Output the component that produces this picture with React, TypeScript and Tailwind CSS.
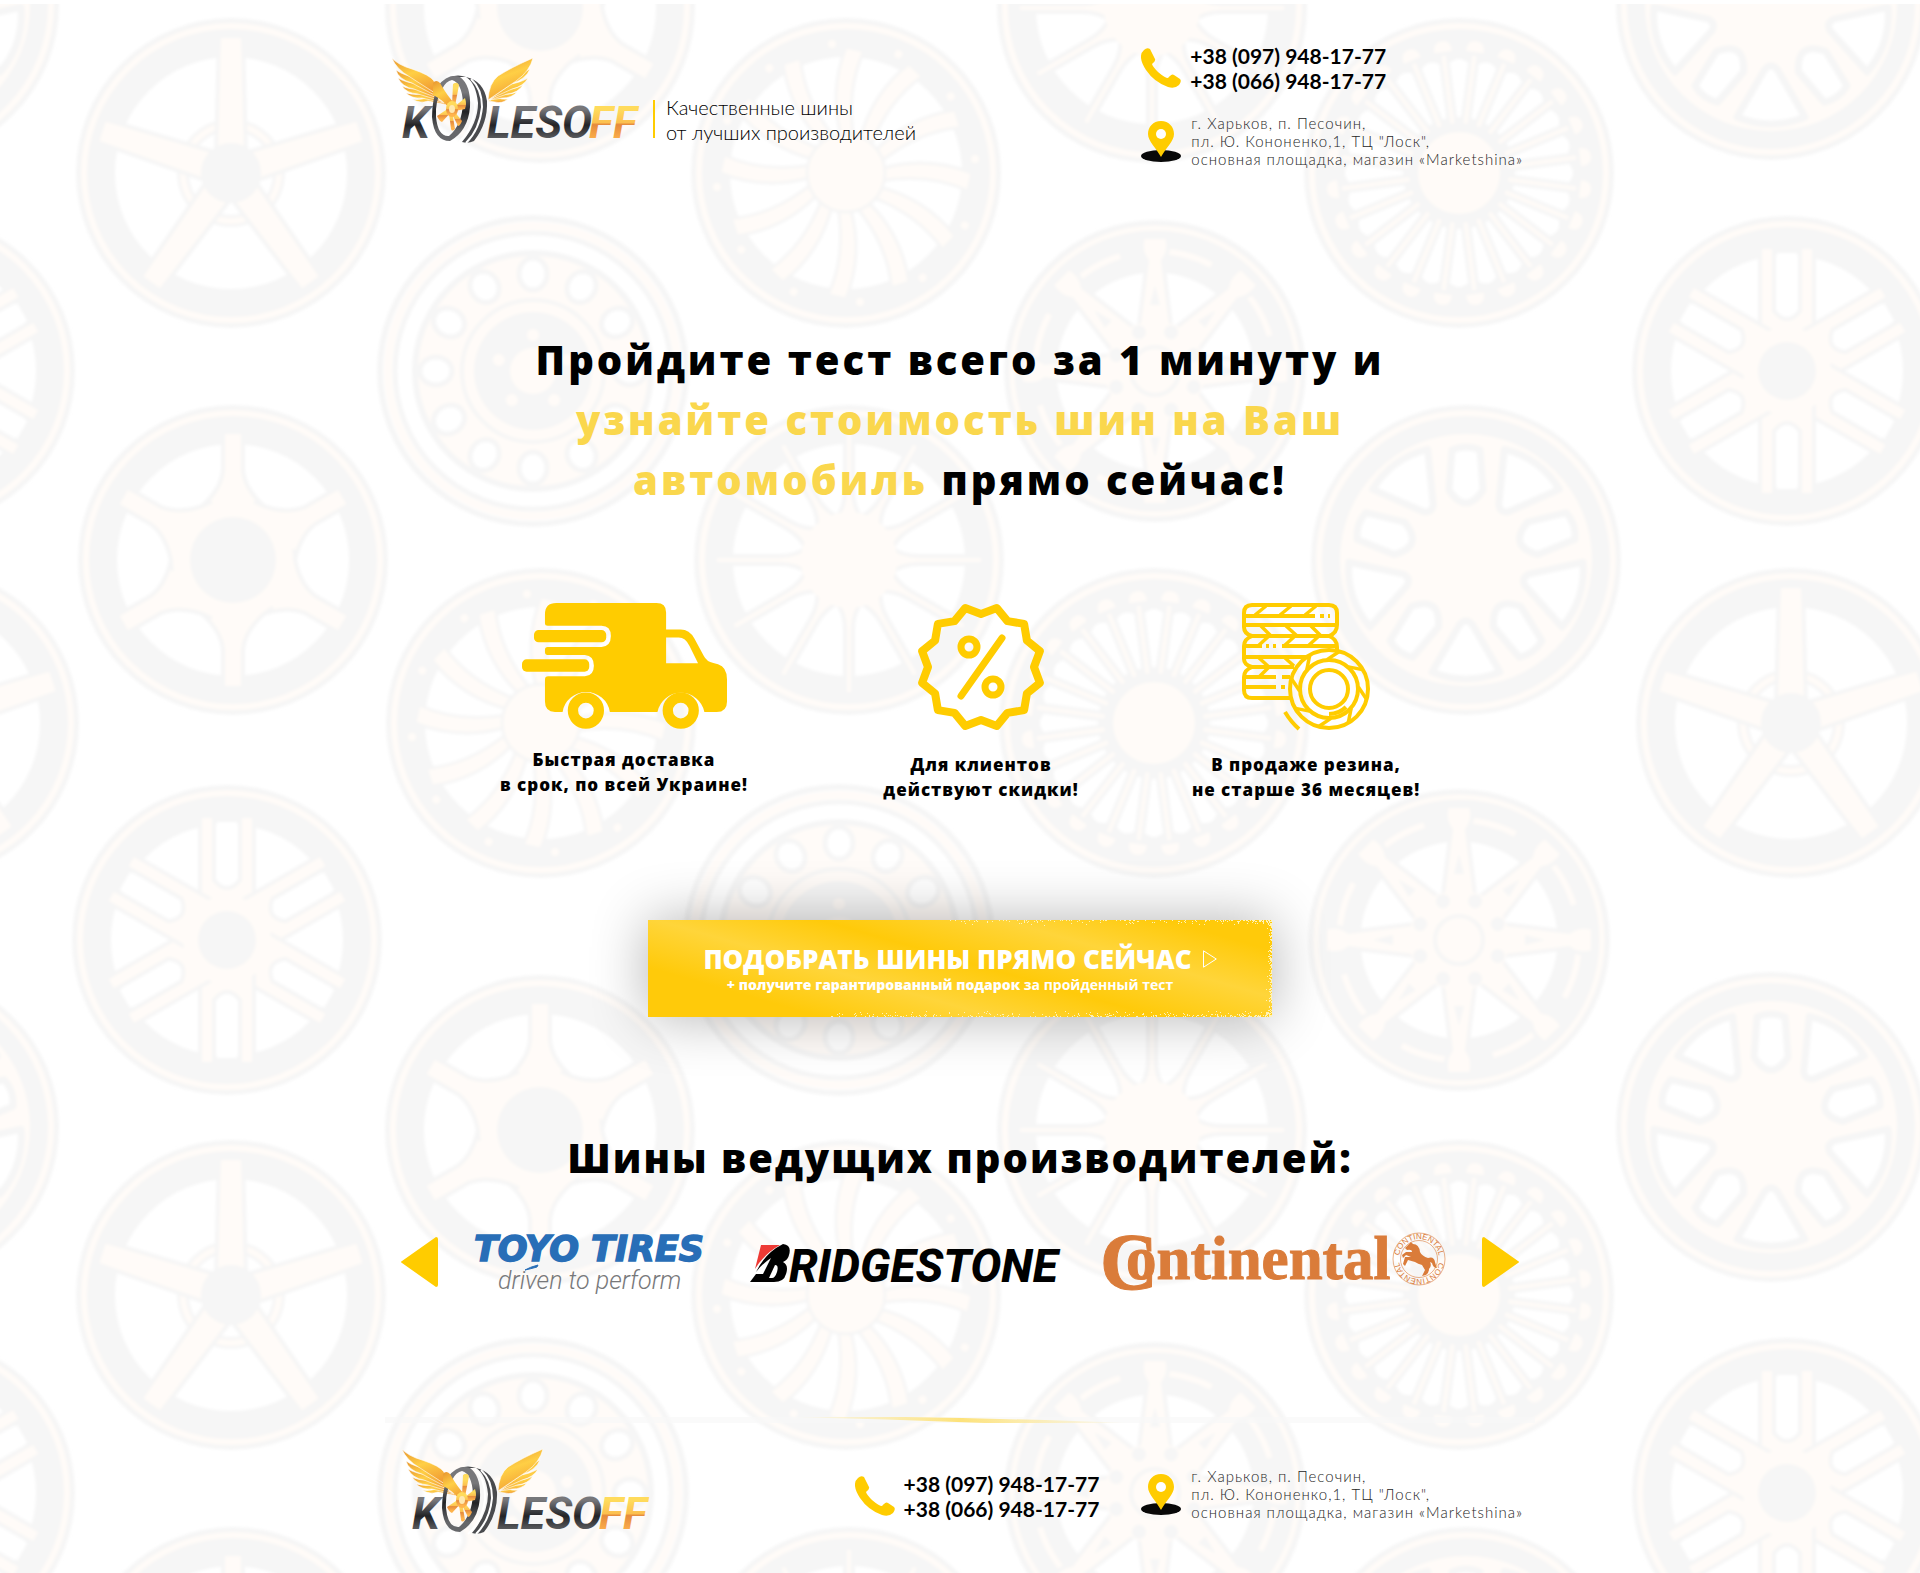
import React from "react";

const GRAY = "#f6f6f6";
const CREAM = "#fffbf8";
const HALO = "#f6f6f6";

type Kind = "five" | "six" | "double" | "pod" | "twist" | "thin" | "steel" | "spokes" | "fancy";

const TILE_W = 1867;
const TILE_H = 1122;

const wheels: { k: Kind; x: number; y: number }[] = [
  { k: "five", x: 231, y: 173 },
  { k: "six", x: 233, y: 560 },
  { k: "double", x: 227, y: 940 },
  { k: "six", x: 540, y: 8 },
  { k: "steel", x: 533, y: 371 },
  { k: "twist", x: 541, y: 723 },
  { k: "twist", x: 846, y: 173 },
  { k: "thin", x: 849, y: 560 },
  { k: "steel", x: 839, y: 940 },
  { k: "thin", x: 1152, y: 8 },
  { k: "fancy", x: 1155, y: 371 },
  { k: "spokes", x: 1154, y: 723 },
  { k: "spokes", x: 1459, y: 173 },
  { k: "pod", x: 1466, y: 560 },
  { k: "fancy", x: 1459, y: 940 },
  { k: "pod", x: 1771, y: 5 },
  { k: "double", x: 1787, y: 371 },
  { k: "five", x: 1791, y: 723 },
];

const turns = (n: number) => Array.from({ length: n }, (_, i) => (360 / n) * i);

function Rim({ hole = 116 }: { hole?: number }) {
  return (
    <>
      <circle r="152" fill={GRAY} stroke={HALO} strokeWidth="6" />
      <circle r="147" fill="none" stroke={CREAM} strokeWidth="6" />
      {hole > 0 && <circle r={hole} fill="#fff" />}
    </>
  );
}

function Wheel({ k }: { k: Kind }) {
  switch (k) {
    case "five":
      return (
        <>
          <Rim />
          <circle r="48" fill="none" stroke={HALO} strokeWidth="12" />
          <circle r="48" fill="none" stroke={CREAM} strokeWidth="6" />
          {turns(5).map((a) => (
            <path key={a} transform={`rotate(${a})`} d="M-15 -20 L-12 -137 H12 L15 -20Z" fill={CREAM} stroke={HALO} strokeWidth="4" />
          ))}
          <circle r="30" fill={GRAY} />
        </>
      );
    case "six":
      return (
        <>
          <Rim />
          {turns(6).map((a) => (
            <path key={a} transform={`rotate(${a})`} d="M-38 -48 Q-12 -68 -10 -90 V-128 H10 V-90 Q12 -68 38 -48 L0 0Z" fill={CREAM} stroke={HALO} strokeWidth="4" />
          ))}
          <circle r="60" fill={CREAM} />
          <circle r="43" fill={GRAY} />
        </>
      );
    case "double":
      return (
        <>
          <Rim />
          {turns(6).map((a) => (
            <g key={a} transform={`rotate(${a})`}>
              <path d="M-27 -30 V-124 H-13 V-60 Q0 -44 13 -60 V-124 H27 V-30Z" fill={CREAM} stroke={HALO} strokeWidth="4" />
              <path d="M-10 -118 V-64 Q0 -50 10 -64 V-118Z" fill="#fff" />
            </g>
          ))}
          <circle r="44" fill={CREAM} />
          <circle r="29" fill={GRAY} />
        </>
      );
    case "pod":
      return (
        <>
          <Rim hole={0} />
          <circle r="126" fill={CREAM} />
          {turns(5).map((a) => (
            <g key={a} transform={`rotate(${a})`} fill="#fff" stroke={HALO} strokeWidth="7" strokeLinejoin="round">
              <path d="M-14 -110 Q0 -116 14 -110 L17 -70 Q0 -44 -17 -70Z" />
              <path transform="rotate(36)" d="M-34 -112 Q0 -126 34 -112 L6 -64 Q0 -58 -6 -64Z" />
            </g>
          ))}
        </>
      );
    case "twist":
      return (
        <>
          <Rim />
          {turns(12).map((a) => (
            <g key={a} transform={`rotate(${a})`}>
              <path d="M-4 -34 Q-18 -80 0 -126 L18 -122 Q0 -84 8 -34Z" fill={CREAM} stroke={HALO} strokeWidth="3" />
              <circle cx="-14" cy="-129" r="4" fill={CREAM} />
            </g>
          ))}
          <circle r="39" fill={CREAM} stroke={HALO} strokeWidth="3" />
        </>
      );
    case "thin":
      return (
        <>
          <Rim />
          {turns(12).map((a) => (
            <path key={a} transform={`rotate(${a})`} d="M-14 -40 Q-4 -52 -4 -70 V-134 H4 V-70 Q4 -52 14 -40Z" fill={CREAM} stroke={HALO} strokeWidth="4" />
          ))}
          <circle r="48" fill={CREAM} />
        </>
      );
    case "steel":
      return (
        <>
          <circle r="153" fill="#fff" stroke={HALO} strokeWidth="6" />
          <circle r="145" fill="none" stroke={CREAM} strokeWidth="8" />
          <circle r="138" fill="#fff" stroke={HALO} strokeWidth="5" />
          <circle r="118" fill={CREAM} stroke={HALO} strokeWidth="6" />
          {turns(12).map((a) => (
            <ellipse key={a} transform={`rotate(${a})`} cy="-97" rx="14" ry="16" fill="#fff" stroke={HALO} strokeWidth="5" />
          ))}
          <circle r="71" fill={CREAM} stroke={HALO} strokeWidth="4" />
          <circle r="59" fill={GRAY} />
          {turns(5).map((a) => (
            <circle key={a} transform={`rotate(${a})`} cy="-36" r="6" fill={CREAM} />
          ))}
          <circle r="23" fill={CREAM} />
        </>
      );
    case "spokes":
      return (
        <>
          <Rim hole={0} />
          {turns(24).map((a) => (
            <g key={a} transform={`rotate(${a})`}>
              <path d="M-2 -56 L-9 -110 Q0 -118 9 -110 L2 -56Z" fill="#fff" />
              <path transform="rotate(7.5)" d="M0 -50 V-118" stroke={CREAM} strokeWidth="4" />
              <path transform="rotate(7.5)" d="M-9 -122 Q-9 -133 0 -133 Q9 -133 9 -122Z" fill={CREAM} />
            </g>
          ))}
          <circle r="41" fill={CREAM} />
        </>
      );
    case "fancy":
      return (
        <>
          <circle r="148" fill={GRAY} stroke={HALO} strokeWidth="6" />
          <circle r="143" fill="none" stroke={CREAM} strokeWidth="5" />
          <circle r="100" fill="#fff" stroke={HALO} strokeWidth="3" />
          <circle r="120" fill="none" stroke={CREAM} strokeWidth="6" strokeDasharray="60 34" />
          {turns(8).map((a) => (
            <g key={a} transform={`rotate(${a})`}>
              <path d="M-17 -38 L-8 -110 Q-16 -120 -12 -134 H12 Q16 -120 8 -110 L17 -38Z" fill={CREAM} stroke={HALO} strokeWidth="4" />
              <path d="M-5 -66 L0 -86 L5 -66Z" fill={GRAY} />
            </g>
          ))}
          <circle r="50" fill={CREAM} />
          {turns(8).map((a) => (
            <circle key={a} transform={`rotate(${a + 22.5})`} cy="-42" r="7" fill={GRAY} />
          ))}
          <circle r="24" fill="none" stroke={GRAY} strokeWidth="4" />
        </>
      );
  }
}

function Backdrop() {
  return (
    <svg className="absolute inset-x-0 top-1 bottom-0 -z-10 h-full w-full" aria-hidden="true">
      <defs>
        <filter id="soft" x="-5%" y="-5%" width="110%" height="110%">
          <feGaussianBlur stdDeviation="1.5" />
        </filter>
        <pattern id="wheels" width={TILE_W} height={TILE_H} patternUnits="userSpaceOnUse" y="-4">
          <g filter="url(#soft)">
            {wheels.flatMap((w, i) =>
              [0, -TILE_W].flatMap((dx) =>
                [0, TILE_H].map((dy) => {
                  const x = w.x + dx;
                  const y = w.y + dy;
                  if (x < -160 || y > TILE_H + 160) return null;
                  return (
                    <g key={`${i}${dx}${dy}`} transform={`translate(${x} ${y})`}>
                      <Wheel k={w.k} />
                    </g>
                  );
                })
              )
            )}
          </g>
        </pattern>
      </defs>
      <rect width="100%" height="100%" fill="url(#wheels)" />
    </svg>
  );
}

const leftFeathers = [
  "M0 1 Q4 12 18 20 L46 38 L42 24 Q38 18 20 12 Q6 8 0 1Z",
  "M4 13 Q6 22 20 26 L46 40 L30 22 Q12 19 4 13Z",
  "M6 21 Q10 30 22 32 L48 42 L28 27 Q14 26 6 21Z",
  "M10 29 Q14 36 26 37 L50 44 L30 32 Q18 33 10 29Z",
  "M14 36 Q20 42 30 41 L52 46 L34 36 Q24 39 14 36Z",
  "M20 42 Q28 47 36 44 L56 48 L40 38 Q30 44 20 42Z",
];
const rightFeathers = [
  "M141 1 Q120 10 106 19 Q97 26 96 43 L124 24 Q138 14 141 1Z",
  "M138 12 Q134 22 121 26 L98 42 L112 24 Q128 18 138 12Z",
  "M136 21 Q132 29 120 32 L98 42 L114 28 Q128 26 136 21Z",
  "M131 28 Q126 36 115 37 L98 43 L112 33 Q124 32 131 28Z",
  "M125 35 Q120 41 110 41 L98 43 L108 37 Q118 38 125 35Z",
  "M116 42 Q110 47 103 45 L96 44 L104 40 Q110 43 116 42Z",
];

function Logo({ id }: { id: string }) {
  const g = (n: string) => `url(#${id}-${n})`;
  return (
    <svg viewBox="0 0 248 88" className="h-[88px] w-[248px] shrink-0 overflow-visible" role="img" aria-label="Kolesoff">
      <defs>
        <linearGradient id={`${id}-wing`} x1="0" y1="0" x2="0.4" y2="1">
          <stop offset="0" stopColor="#e8952f" />
          <stop offset="0.5" stopColor="#ffcf45" />
          <stop offset="1" stopColor="#f2a034" />
        </linearGradient>
        <linearGradient id={`${id}-dark`} x1="0" y1="0" x2="0" y2="1">
          <stop offset="0.25" stopColor="#77777a" />
          <stop offset="0.55" stopColor="#222326" />
          <stop offset="0.85" stopColor="#66676a" />
        </linearGradient>
        <linearGradient id={`${id}-fire`} x1="0" y1="0" x2="0" y2="1">
          <stop offset="0.25" stopColor="#ffdb5c" />
          <stop offset="0.5" stopColor="#fcc04f" />
          <stop offset="0.54" stopColor="#e58a3c" />
          <stop offset="0.85" stopColor="#ffb44c" />
        </linearGradient>
      </defs>
      <g fill={g("wing")} stroke="#fff" strokeWidth="0.6">
        {[...leftFeathers].reverse().map((d) => <path key={d} d={d} />)}
        {[...rightFeathers].reverse().map((d) => <path key={d} d={d} />)}
      </g>
      <g fontFamily="Roboto, sans-serif" fontWeight="700" fontStyle="italic" fontSize="45">
        <text x="10" y="81" fill={g("dark")}>K</text>
        <text x="95" y="81" fill={g("dark")}>LESO</text>
        <text x="197" y="81" fill={g("fire")}>FF</text>
      </g>
      <path d="M58 20 Q66 17 74 20 Q92 24 95 44 Q96 66 82 84 Q76 87 70 85 Q86 66 86 46 Q84 26 74 20Z" fill="#4a4b4e" />
      <path d="M79 22 Q90 32 90 50 Q88 72 74 86 M73 21 Q84 32 83 52 Q80 74 66 86" stroke="#fff" strokeWidth="2" fill="none" />
      <path
        fillRule="evenodd"
        d="M46 29 Q56 16 68 20 Q79 28 78 50 Q76 74 58 84 Q42 84 40 60 Q40 42 46 29Z M50 32 Q43 44 44 60 Q46 80 57 79 Q70 68 71 46 Q70 26 60 23 Q54 24 50 32Z"
        fill={g("dark")}
      />
      <path d="M41 26 Q44 22 48 26 Q56 40 63 47 L58 52 Q50 42 41 38Z" fill={g("wing")} />
      <g fill={g("fire")}>
        <path d="M60 48 L61 27 Q65 24 67 28 L63 49Z" />
        <path d="M62 50 L73 41 Q75 47 73 52 L63 54Z" />
        <path d="M62 54 L70 64 Q68 69 66 69 L60 57Z" />
        <path d="M60 54 L63 72 Q60 75 59 72 L57 56Z" />
        <path d="M60 54 L50 65 Q47 64 45 59 L57 51Z" />
        <ellipse cx="60" cy="52" rx="6" ry="8" />
      </g>
      <ellipse cx="60" cy="52" rx="3" ry="4" fill="#ffe9b0" />
    </svg>
  );
}

function Phones() {
  return (
    <div className="flex items-center gap-[9px]">
      <svg viewBox="0 0 40 40" className="h-10 w-10 shrink-0" fill="#fc0" aria-hidden="true">
        <path d="M3 2 Q6 -1 9 1 L14 11 Q15 13 11 16 Q12 19 17 24 Q24 30 27 30 Q31 25 33 27 L39 31 Q41 33 38 37 Q34 41 27 39 Q13 34 5 22 Q-4 8 3 2Z" />
      </svg>
      <div className="flex flex-col font-['Lato',sans-serif] text-[21px] leading-[25px] font-bold text-black">
        <a href="tel:+380979481777">+38 (097) 948-17-77</a>
        <a href="tel:+380669481777">+38 (066) 948-17-77</a>
      </div>
    </div>
  );
}

function Address() {
  return (
    <div className="flex items-center gap-[10px]">
      <svg viewBox="0 0 40 41" className="h-[41px] w-10 shrink-0" aria-hidden="true">
        <ellipse cx="20" cy="35" rx="20" ry="6" fill="#080808" />
        <path d="M20 0 C28 0 33 6 33 13 C33 20 25 27 20 36 C15 27 7 20 7 13 C7 6 12 0 20 0Z" fill="#fc0" />
        <circle cx="20" cy="13" r="5" fill="#fff" />
      </svg>
      <address className="font-['Lato',sans-serif] text-[15px] leading-[18px] font-light tracking-[1px] whitespace-nowrap text-neutral-800 not-italic">
        г. Харьков, п. Песочин,
        <br />
        пл. Ю. Кононенко,1, ТЦ "Лоск",
        <br />
        основная площадка, магазин «Marketshina»
      </address>
    </div>
  );
}

function TruckIcon() {
  return (
    <svg viewBox="123 40 616 378" className="h-[126px] w-[205px]" fill="#fc0" aria-hidden="true">
      <path
        fillRule="evenodd"
        d="M192 102 V74 Q192 40 226 40 H527 Q556 40 556 68 V119 H600 Q626 119 641 146 L669 198 Q678 216 698 220 L712 224 Q739 232 739 270 V336 Q739 367 708 367 H671 A72 72 0 0 0 530 367 H387 A72 72 0 0 0 245 367 H222 Q192 367 192 336 V270 Q192 260 202 260 H312 Q339 258 339 228 Q339 198 312 196 H200 Q192 196 192 186 V180 Q192 172 200 172 H362 Q390 170 390 139 Q390 108 362 108 H200 Q192 108 192 102Z M556 143 V221 H652 L626 168 Q614 143 594 143Z"
      />
      <rect x="159" y="121" width="217" height="37" rx="14" />
      <rect x="123" y="209" width="202" height="37" rx="14" />
      <circle cx="315" cy="363" r="39" fill="none" stroke="#fc0" strokeWidth="31" />
      <circle cx="600" cy="363" r="39" fill="none" stroke="#fc0" strokeWidth="31" />
    </svg>
  );
}

const badgePoints = Array.from({ length: 24 }, (_, i) => {
  const a = ((i * 15 - 90) * Math.PI) / 180;
  const r = i % 2 ? 61 : 53;
  return `${(Math.cos(a) * r).toFixed(1)},${(Math.sin(a) * r).toFixed(1)}`;
}).join(" ");

function DiscountIcon() {
  return (
    <svg viewBox="-64 -64 128 128" className="h-32 w-32" fill="none" stroke="#fc0" strokeLinejoin="round" strokeLinecap="round" aria-hidden="true">
      <polygon points={badgePoints} strokeWidth="8" />
      <circle cx="-12" cy="-20" r="8" strokeWidth="7" />
      <circle cx="12" cy="20" r="8" strokeWidth="7" />
      <path d="M21 -29 L-20 29" strokeWidth="7" />
    </svg>
  );
}

function TiresIcon() {
  return (
    <svg viewBox="0 0 128 128" className="h-32 w-32" fill="none" stroke="#fc0" strokeWidth="4" aria-hidden="true">
      <path d="M95 50 V44 Q95 36 87 33 Q95 30 95 22 V10 Q95 2 87 2 H10 Q2 2 2 10 V24 Q2 31 10 33 Q2 36 2 43 V56 Q2 62 10 64 Q2 67 2 74 V87 Q2 95 10 95 H49" />
      <path d="M2 13 H73 M78 13 H82 M86 13 H88 M2 22 H95 M10 33 H87 M2 43 H20 M24 43 H27 M31 43 H34 M40 43 H95 M2 54 H66 M10 64 H52 M2 74 H34 M40 74 H48 M2 84 H34 M39 84 H43" />
      <path d="M13 12 L24 3 M38 12 L49 3 M63 12 L74 3 M18 22 L28 32 L16 43 M43 22 L54 32 L42 43 M68 22 L78 32 L66 43 M16 54 L27 64 L17 74 M42 54 L52 63" strokeWidth="3.5" />
      <circle cx="87" cy="86" r="39" />
      <circle cx="87" cy="86" r="29" />
      <circle cx="87" cy="86" r="19" />
      {turns(8).map((a) => (
        <path key={a} transform={`rotate(${a + 6} 87 86)`} d="M82 57 L94 47" strokeWidth="3.5" />
      ))}
      <path d="M43 109 Q49 119 57 126 M87 111 Q97 111 104 104" />
    </svg>
  );
}

const features = [
  { icon: <TruckIcon />, lines: ["Быстрая доставка", "в срок, по всей Украине!"], gap: "mt-[18px]" },
  { icon: <DiscountIcon />, lines: ["Для клиентов", "действуют скидки!"], gap: "mt-[21px]" },
  { icon: <TiresIcon />, lines: ["В продаже резина,", "не старше 36 месяцев!"], gap: "mt-[21px]" },
];

// Deterministic scatter of light grains along the button's edges.
const grains = (() => {
  let s = 7;
  const rnd = () => (s = (s * 16807) % 2147483647) / 2147483647;
  const out: { x: number; y: number }[] = [];
  for (let i = 0; i < 620; i++) {
    const x = Math.floor((1 - Math.pow(rnd(), 1.6)) * 624);
    const d = Math.floor(rnd() * rnd() * 6);
    const top = rnd() < 0.45;
    if (x > (top ? 300 : 180)) out.push({ x, y: top ? d : 96 - d });
  }
  for (let i = 0; i < 160; i++) out.push({ x: 623 - Math.floor(rnd() * rnd() * 6), y: Math.floor(rnd() * 97) });
  return out;
})();

function CallToAction() {
  return (
    <button
      type="button"
      className="relative flex w-[624px] flex-col items-center bg-[linear-gradient(16deg,#ffca0a_18%,#ffd53a_36%,#ffca0a_53%,#ffd53a_72%,#ffca0a_89%)] pt-[22px] pb-[23px] font-['Open_Sans',sans-serif] text-white shadow-[0_0_56px_rgba(0,0,0,0.3)]"
    >
      <svg viewBox="0 0 624 97" preserveAspectRatio="none" className="absolute inset-0 h-full w-full" fill="#fff3b8" aria-hidden="true">
        {grains.map((p, i) => (
          <rect key={i} x={p.x} y={p.y} width="1" height="1" />
        ))}
      </svg>
      <span className="flex items-center gap-[11px] text-[26px] leading-[34px] font-extrabold">
        ПОДОБРАТЬ ШИНЫ ПРЯМО СЕЙЧАС
        <svg viewBox="0 0 14 18" className="h-[18px] w-[14px]" fill="none" stroke="#fff" aria-hidden="true">
          <path d="M0.5 0.8 L13.3 9 L0.5 17.2Z" />
        </svg>
      </span>
      <span className="pr-5 text-[14px] leading-[18px] font-bold">
        <span className="font-extrabold">+ получите гарантированный подарок</span> за пройденный тест
      </span>
    </button>
  );
}

function Toyo() {
  return (
    <svg viewBox="0 0 232 64" className="mt-1 h-16 w-[232px] overflow-visible" role="img" aria-label="Toyo Tires — driven to perform">
      <text x="-4" y="29" fontFamily="'DejaVu Sans', sans-serif" fontWeight="700" fontStyle="italic" fontSize="35" fill="#286eb7" stroke="#286eb7" strokeWidth="1.5">TOYO TIRES</text>
      <text x="20" y="57" fontFamily="Roboto, sans-serif" fontWeight="300" fontStyle="italic" fontSize="25" fill="#77787a">driven to perform</text>
      <path d="M47 38 Q52 35 60 33 L59 35 Q52 37 47 38Z" fill="#286eb7" stroke="#286eb7" />
    </svg>
  );
}

function Bridgestone() {
  return (
    <svg viewBox="0 0 310 40" className="mt-1 h-10 w-[310px] overflow-visible" role="img" aria-label="Bridgestone">
      <path d="M11 1 H30 Q14 10 5 25 Z" fill="#ee3a35" />
      <path d="M33 0 Q42 1 39 11 Q38 16 33 18 Q39 21 36 30 Q34 38 24 38 H0 L6 30 H13 L21 14 Q12 20 6 28 Q15 9 33 0Z" fill="#000" />
      <path d="M25 21 L19 34 H22 Q25 34 27 28 Q29 21 25 21Z" fill="#fff" />
      <text x="39" y="38" fontFamily="Roboto, sans-serif" fontWeight="800" fontStyle="italic" fontSize="46" fill="#000">RIDGESTONE</text>
    </svg>
  );
}

function Continental() {
  return (
    <svg viewBox="0 0 342 60" className="h-[60px] w-[342px] overflow-visible" fill="#da7c3a" role="img" aria-label="Continental">
      <defs>
        <path id="ring-top" d="M299 27 A20 20 0 0 1 339 27" />
        <path id="ring-bottom" d="M339 27 A20 20 0 0 1 299 27" />
      </defs>
      <text x="0" y="57" fontFamily="'Liberation Serif', serif" fontWeight="700" fontSize="80" stroke="#da7c3a">C</text>
      <text x="26" y="47" fontFamily="'Liberation Serif', serif" fontWeight="700" fontSize="61" stroke="#da7c3a">ontinental</text>
      <g fill="none" stroke="#da7c3a" strokeWidth="0.6">
        <circle cx="319" cy="27" r="26" />
        <circle cx="319" cy="27" r="18.5" />
      </g>
      <g fontFamily="'Liberation Sans', sans-serif" fontSize="8">
        <text>
          <textPath href="#ring-top" startOffset="50%" textAnchor="middle">CONTINENTAL</textPath>
        </text>
        <text>
          <textPath href="#ring-bottom" startOffset="50%" textAnchor="middle">CONTINENTAL</textPath>
        </text>
      </g>
      <path transform="translate(3 0)" d="M308 10 L310 12 Q316 12 317 20 Q319 24 325 26 Q331 24 332 30 Q333 34 334 36 Q330 36 329 31 L327 30 Q329 34 326 37 Q326 41 323 43 L319 44 L322 38 L319 33 Q315 32 312 30 L305 28 L302 34 L300 32 L302 25 L308 25 L303 23 L300 26 L299 23 L303 20 L309 20 Q309 17 304 18 L302 16Z" />
    </svg>
  );
}

function Arrow({ dir }: { dir: "left" | "right" }) {
  return (
    <button type="button" aria-label={dir === "left" ? "Назад" : "Вперёд"} className="shrink-0">
      <svg viewBox="0 0 37 50" className="h-[50px] w-[37px]" fill="#fc0" aria-hidden="true">
        {dir === "left" ? <path d="M1 24 Q-1 25 1 26 L35 50 Q37 50 37 48 V2 Q37 0 35 0Z" /> : <path d="M36 24 Q38 25 36 26 L2 50 Q0 50 0 48 V2 Q0 0 2 0Z" />}
      </svg>
    </button>
  );
}

export default function App() {
  return (
    <div className="relative isolate overflow-hidden bg-white text-black">
      <Backdrop />
      <div className="mx-auto w-full max-w-[1150px]">
        <header className="flex items-start justify-between pt-[43px] pr-3 pl-[7px]">
          <div className="flex items-end gap-[13px] pt-[14px]">
            <Logo id="top" />
            <div className="flex items-center gap-[11px]">
              <span className="h-[38px] w-[2px] bg-[#fc0]" />
              <p className="pt-[2px] font-['Lato',sans-serif] text-[20px] leading-[25px] font-light">
                Качественные шины
                <br />
                от лучших производителей
              </p>
            </div>
          </div>
          <div className="flex flex-col gap-[21px]">
            <Phones />
            <Address />
          </div>
        </header>

        <main>
          <h1 className="mx-auto mt-[162px] max-w-[900px] text-center font-['Open_Sans',sans-serif] text-[40px] leading-[60px] font-extrabold tracking-[3px]">
            Пройдите тест всего за 1 минуту и
            <br />
            <span className="text-[#fad74d]">
              узнайте стоимость шин на Ваш
              <br />
              автомобиль
            </span>{" "}
            прямо сейчас!
          </h1>

          <ul className="mt-[93px] grid grid-cols-[478fr_236fr_414fr] pr-[22px]">
            {features.map((f) => (
              <li key={f.lines[0]} className="flex flex-col items-center text-center">
                {f.icon}
                <p className={`${f.gap} font-['Open_Sans',sans-serif] text-[17px] leading-[25px] font-extrabold tracking-[1px] whitespace-nowrap`}>
                  {f.lines[0]}
                  <br />
                  {f.lines[1]}
                </p>
              </li>
            ))}
          </ul>

          <div className="mt-[118px] flex justify-center">
            <CallToAction />
          </div>

          <h2 className="mt-[111px] text-center font-['Open_Sans',sans-serif] text-[40px] leading-[60px] font-extrabold tracking-[2px]">
            Шины ведущих производителей:
          </h2>

          <div className="mt-10 flex items-center justify-between pr-4 pl-4">
            <Arrow dir="left" />
            <Toyo />
            <Bridgestone />
            <Continental />
            <Arrow dir="right" />
          </div>
        </main>

        <svg viewBox="0 0 1150 6" preserveAspectRatio="none" className="mt-[121px] h-[6px] w-full" aria-hidden="true">
          <defs>
            <linearGradient id="glow">
              <stop offset="0" stopColor="#fde68a" stopOpacity="0" />
              <stop offset="0.5" stopColor="#fde27a" />
              <stop offset="1" stopColor="#fde68a" stopOpacity="0" />
            </linearGradient>
          </defs>
          <rect width="1150" height="6" fill="#f8f8f8" opacity="0.7" />
          <path d="M405 0 L520 0 Q640 2 745 6 L600 6 Q500 2 405 0Z" fill="url(#glow)" />
        </svg>

        <footer className="flex items-start pt-[25px] pr-3 pb-[39px] pl-[17px]">
          <Logo id="bottom" />
          <div className="ml-auto pt-[23px]">
            <Phones />
          </div>
          <div className="ml-[42px] pt-[19px]">
            <Address />
          </div>
        </footer>
      </div>
    </div>
  );
}
